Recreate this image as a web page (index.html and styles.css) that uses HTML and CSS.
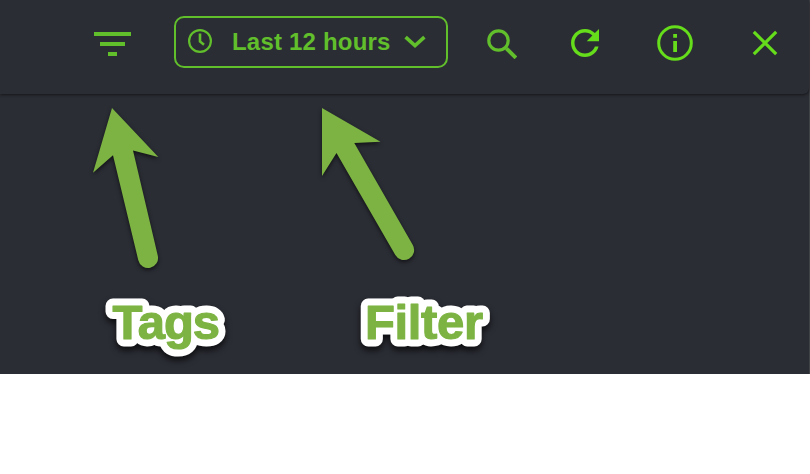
FILE: index.html
```
<!DOCTYPE html>
<html lang="en">
<head>
<meta charset="utf-8">
<title>Toolbar guide</title>
<link rel="stylesheet" href="styles.css">
</head>
<body>
<main class="panel">
  <header class="toolbar">
    <svg class="icon tags" viewBox="0 0 37 24"><path d="M0 0h37v4H0zM6 10h25v4H6zM14 20h9v4h-9z" fill="currentColor"/></svg>
    <button class="range">
      <svg class="clock" viewBox="0 0 24 24" fill="none" stroke="currentColor" stroke-width="2.2"><circle cx="12" cy="12" r="10.9"/><path d="M12 4.500v8l4 3.200" stroke-width="2.600"/></svg>
      <span class="label">Last 12 hours</span>
      <svg class="chevron" viewBox="0 0 22 14" fill="none" stroke="currentColor" stroke-width="3.600"><path d="M1.600 2.200 11 10.500l9.400-8.300"/></svg>
    </button>
    <svg class="icon search" viewBox="0 0 30 30" fill="none" stroke="currentColor"><circle cx="11.500" cy="11.500" r="9.700" stroke-width="3.200"/><path d="m19.300 19.300 9.600 9.600" stroke-width="3.800"/></svg>
    <svg class="icon refresh" viewBox="4 4 16 16"><path fill="currentColor" d="M17.650 6.350C16.200 4.900 14.210 4 12 4c-4.420 0-7.990 3.580-7.990 8s3.570 8 7.990 8c3.730 0 6.840-2.550 7.730-6h-2.080c-.82 2.330-3.040 4-5.650 4-3.310 0-6-2.690-6-6s2.690-6 6-6c1.660 0 3.140.69 4.220 1.780L13 11h7V4z"/></svg>
    <svg class="icon info" viewBox="0 0 36 36"><circle cx="18" cy="18" r="16.300" fill="none" stroke="currentColor" stroke-width="3"/><path d="M16.200 9H20v3.800h-3.800zM16.200 16H20v11h-3.800z" fill="currentColor"/></svg>
    <svg class="icon close" viewBox="0 0 26 26"><path d="m1.800 1.800 22.400 22.400M24.200 1.800 1.800 24.200" stroke="currentColor" stroke-width="3.200"/></svg>
  </header>
  <svg class="annotations" viewBox="0 0 810 374">
    <g class="arrows">
      <path d="M112 108 158.300 157 133 150.500 157.800 255.800A10 10 0 0 1 138.300 260.300L113 155.300 93 172.800Z"/>
      <path d="M322 108 380.500 141.800 354.300 143 412.800 245A10 10 0 0 1 395.300 255L336.500 153 322 176Z"/>
    </g>
    <defs>
      <text id="tags-caption" x="112.500" y="338.800" textLength="107.500" lengthAdjust="spacing">Tags</text>
      <text id="filter-caption" x="365" y="338.800" textLength="118" lengthAdjust="spacing">Filter</text>
    </defs>
    <g class="captions">
      <g class="outline"><use href="#tags-caption"/><use href="#filter-caption"/></g>
      <g class="face"><use href="#tags-caption"/><use href="#filter-caption"/></g>
    </g>
  </svg>
</main>
</body>
</html>
```
FILE: styles.css
```
* { box-sizing: border-box; }
body {
  margin: 0;
  background: #fff;
  font-family: "Liberation Sans", Arial, sans-serif;
}
.panel {
  position: relative;
  height: 374px;
  background: #2b2d35;
  border-right: 1px solid #414246;
}
.toolbar {
  display: flex;
  align-items: center;
  height: 94px;
  padding: 0 31px 10px 94px;
  background: #2b2d35;
  border-bottom-right-radius: 6px;
  box-shadow: 0 1px 3px #151619;
  color: #65dd1b;
}
.toolbar svg { display: block; flex: none; }
.tags { width: 37px; height: 24px; margin: 4px 43px 0 0; color: #62bf2c; }
.range {
  display: flex;
  flex: none;
  align-items: center;
  width: 274px;
  height: 52px;
  padding: 0 20px 0 12px;
  border: 2px solid #62bf2c;
  border-radius: 10px;
  background: transparent;
  color: #62bf2c;
  font: bold 24px/28px "Liberation Sans", Arial, sans-serif;
}
.clock { width: 24px; height: 24px; margin-top: -2px; }
.label {
  flex: none;
  width: 159px;
  margin: 0 13px 0 20px;
  letter-spacing: 0.2px;
  white-space: nowrap;
  text-align: left;
}
.chevron { width: 22px; height: 14px; margin-top: -1px; }
.search { width: 30px; height: 30px; margin: 4px 0 0 39px; color: #62bf2c; }
.refresh { width: 28px; height: 28px; margin: 2px 0 0 54px; }
.info { width: 36px; height: 36px; margin: 2px 0 0 58px; }
.close { width: 26px; height: 26px; margin: 2px 0 0 59px; }
.annotations {
  position: absolute;
  top: 0;
  left: 0;
  width: 810px;
  height: 374px;
  pointer-events: none;
}
.arrows {
  fill: #7cb342;
  filter: drop-shadow(0 2px 2px rgba(0, 0, 0, 0.6));
}
.captions {
  font: bold 49px "Liberation Sans", Arial, sans-serif;
  stroke-linejoin: round;
  filter: drop-shadow(0 4px 3px rgba(0, 0, 0, 0.7));
}
.outline { fill: #fff; stroke: #fff; stroke-width: 15px; }
.face { fill: #7cb342; stroke: #7cb342; stroke-width: 1.2px; }
```
